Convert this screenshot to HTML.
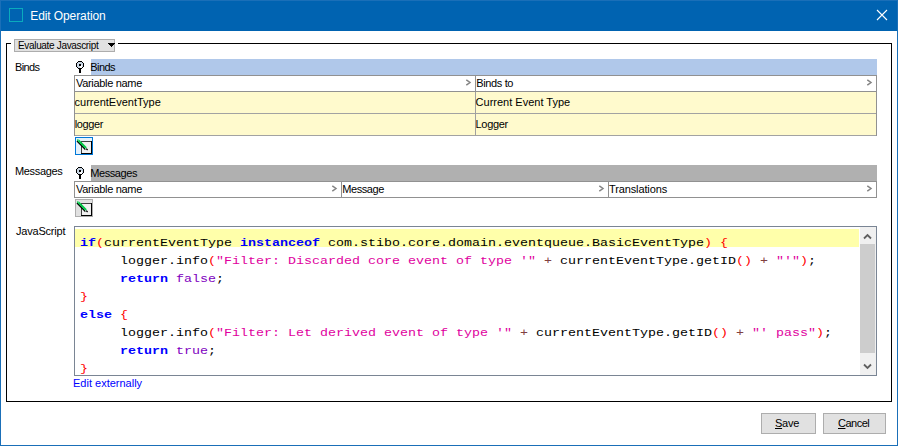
<!DOCTYPE html>
<html>
<head>
<meta charset="utf-8">
<title>Edit Operation</title>
<style>
html,body{margin:0;padding:0;}
body{width:898px;height:446px;overflow:hidden;background:#fff;font-family:"Liberation Sans",sans-serif;font-size:11px;color:#000;position:relative;}
.abs{position:absolute;}
#win{position:absolute;left:0;top:0;width:896px;height:445px;border:1px solid #1A6FB8;border-top:none;background:#fff;}
#title{position:absolute;left:0;top:0;width:896px;height:30px;background:#0063B1;border:1px solid #1A6FB8;border-bottom:none;}
#title .txt{position:absolute;left:29.3px;top:8px;font-size:12px;line-height:14px;color:#fff;white-space:nowrap;letter-spacing:-0.1px;}
#ticon{position:absolute;left:8px;top:7px;width:12px;height:12px;border:1px solid #0AABBD;}
.t{position:absolute;white-space:nowrap;line-height:13px;font-size:11px;}
#grp{position:absolute;left:6px;top:43px;width:884px;height:357px;border:1px solid #000;}
#combo{position:absolute;left:14px;top:39px;width:99px;height:11px;border:1px solid #ADADAD;background:#E1E1E1;}
#combowrap{position:absolute;left:11px;top:38px;width:107px;height:14px;background:#fff;}
.hl{position:absolute;height:16px;}
.tbl{position:absolute;left:74px;width:802px;border:1px solid #828282;box-sizing:content-box;}
.vline{position:absolute;width:1px;background:#919191;}
.hline{position:absolute;height:1px;background:#A2A2A2;}
.btn{position:absolute;border:1px solid #ADADAD;background:#E1E1E1;box-sizing:border-box;}
#code{position:absolute;left:74px;top:226px;width:801px;height:148px;border:1px solid #7A8594;background:#fff;overflow:hidden;}
.ln{position:absolute;left:5px;height:18px;line-height:18px;white-space:pre;font-family:"Liberation Mono",monospace;font-size:13.33px;color:#000;transform:scaleY(0.8);transform-origin:0 12.55px;}
.k{color:#0000FF;font-weight:bold;}
.p{color:#FF0000;}
.s{color:#E0009E;}
.o{color:#804040;}
.c{color:#8000C0;}
</style>
</head>
<body>
<div id="win"></div>
<div id="title">
  <div id="ticon"></div>
  <div class="txt">Edit Operation</div>
  <svg class="abs" style="left:875px;top:8px" width="12" height="12" viewBox="0 0 12 12"><path d="M1 1 L11 11 M11 1 L1 11" stroke="#fff" stroke-width="1.1" fill="none"/></svg>
</div>

<div id="grp"></div>
<div id="combowrap"></div>
<div id="combo"></div>
<div class="t" id="evj" style="left:18px;top:39px;font-size:10px;letter-spacing:-0.33px;">Evaluate Javascript</div>
<svg class="abs" style="left:108px;top:43px" width="7" height="4" viewBox="0 0 7 4" shape-rendering="crispEdges"><path d="M0 0 H7 V1 H6 V2 H5 V3 H4 V4 H3 V3 H2 V2 H1 V1 H0 Z" fill="#000"/></svg>

<!-- Binds -->
<div class="t" id="l_binds" style="left:15px;top:61px;letter-spacing:-0.6px;">Binds</div>
<svg class="abs pin" style="left:76px;top:61px" width="8" height="12" viewBox="0 0 8 12" shape-rendering="crispEdges"><path d="M2 0 H6 V1 H7 V2 H8 V6 H7 V7 H6 V8 H2 V7 H1 V6 H0 V2 H1 V1 H2 Z" fill="#000"/><path d="M2 1 H6 V2 H7 V6 H6 V7 H2 V6 H1 V2 H2 Z" fill="#C9D6E4"/><path d="M4 4 H6 V6 H7 V6 H6 V7 H4 Z" fill="#fff"/><rect x="3" y="3" width="2" height="2" fill="#000"/><rect x="3" y="8" width="2" height="4" fill="#000"/></svg>
<div class="hl" style="left:91px;top:59px;width:786px;background:#B0C8EA;"></div>
<div class="t" id="h_binds" style="left:90.3px;top:61px;letter-spacing:-0.6px;">Binds</div>

<div class="abs" style="left:74px;top:75px;width:803px;height:61px;background:#FFFACD;"></div>
<div class="abs" style="left:74px;top:75px;width:803px;height:17px;background:#fff;"></div>
<div class="hline" style="left:74px;top:75px;width:803px;background:#919191;"></div>
<div class="hline" style="left:74px;top:91px;width:803px;background:#919191;"></div>
<div class="hline" style="left:74px;top:113px;width:803px;"></div>
<div class="hline" style="left:74px;top:135px;width:803px;"></div>
<div class="vline" style="left:74px;top:75px;height:61px;"></div>
<div class="vline" style="left:876px;top:75px;height:61px;"></div>
<div class="vline" style="left:475px;top:75px;height:17px;"></div>
<div class="vline" style="left:475px;top:92px;height:44px;background:#A0A0A0;"></div>
<div class="t" id="b_vn" style="left:76px;top:77px;letter-spacing:-0.32px;">Variable name</div>
<div class="t" id="b_bt" style="left:476.2px;top:77px;letter-spacing:-0.35px;">Binds to</div>
<div class="t" id="b_r1a" style="left:74.6px;top:96px;">currentEventType</div>
<div class="t" id="b_r1b" style="left:475.6px;top:96px;">Current Event Type</div>
<div class="t" id="b_r2a" style="left:74.8px;top:118px;letter-spacing:-0.4px;">logger</div>
<div class="t" id="b_r2b" style="left:475.6px;top:118px;letter-spacing:-0.35px;">Logger</div>
<svg class="abs" style="left:465px;top:79px" width="7" height="7" viewBox="0 0 7 7"><path d="M1.3 0.8 L5 3.5 L1.3 6.2" stroke="#858585" stroke-width="1.5" fill="none"/></svg>
<svg class="abs" style="left:866px;top:79px" width="7" height="7" viewBox="0 0 7 7"><path d="M1.3 0.8 L5 3.5 L1.3 6.2" stroke="#858585" stroke-width="1.5" fill="none"/></svg>

<!-- edit icon 1 -->
<div class="btn" style="left:75px;top:137px;width:18px;height:18px;border-color:#0078D7;background:#E5F1FB;"></div>
<svg class="abs" style="left:75px;top:137px" width="18" height="18" viewBox="0 0 18 18"><g shape-rendering="crispEdges"><rect x="6" y="4" width="11" height="13" fill="#404040"/><rect x="7" y="5" width="9" height="11" fill="#F0F0F0"/><rect x="16" y="4" width="1" height="13" fill="#000"/><rect x="6" y="16" width="11" height="1" fill="#000"/></g><path d="M2.0 4.0 L10.4 12.4" stroke="#000" stroke-width="1.4"/><path d="M3.0 3.0 L10.8 10.8" stroke="#00C846" stroke-width="2" stroke-linecap="round"/><path d="M2.6 2.0 L3.8 3.2" stroke="#e8fff0" stroke-width="1"/><path d="M10.8 11.0 L11.4 11.6" stroke="#fff" stroke-width="1.4"/><path d="M11.2 11.6 L12.6 13.0" stroke="#000" stroke-width="1.3"/></svg>

<!-- Messages -->
<div class="t" id="l_msg" style="left:15px;top:165px;letter-spacing:-0.33px;">Messages</div>
<svg class="abs pin" style="left:76px;top:167px" width="8" height="12" viewBox="0 0 8 12" shape-rendering="crispEdges"><path d="M2 0 H6 V1 H7 V2 H8 V6 H7 V7 H6 V8 H2 V7 H1 V6 H0 V2 H1 V1 H2 Z" fill="#000"/><path d="M2 1 H6 V2 H7 V6 H6 V7 H2 V6 H1 V2 H2 Z" fill="#C9D6E4"/><path d="M4 4 H6 V6 H7 V6 H6 V7 H4 Z" fill="#fff"/><rect x="3" y="3" width="2" height="2" fill="#000"/><rect x="3" y="8" width="2" height="4" fill="#000"/></svg>
<div class="hl" style="left:91px;top:165px;width:786px;background:#B0B0B0;"></div>
<div class="t" id="h_msg" style="left:90.2px;top:167px;letter-spacing:-0.4px;">Messages</div>
<div class="abs" style="left:74px;top:181px;width:803px;height:17px;background:#fff;"></div>
<div class="hline" style="left:74px;top:181px;width:803px;background:#919191;"></div>
<div class="hline" style="left:74px;top:197px;width:803px;background:#919191;"></div>
<div class="vline" style="left:74px;top:181px;height:17px;"></div>
<div class="vline" style="left:876px;top:181px;height:17px;"></div>
<div class="vline" style="left:341px;top:181px;height:17px;"></div>
<div class="vline" style="left:608px;top:181px;height:17px;"></div>
<div class="t" id="m_vn" style="left:76px;top:183px;letter-spacing:-0.32px;">Variable name</div>
<div class="t" id="m_ms" style="left:342.2px;top:183px;letter-spacing:-0.4px;">Message</div>
<div class="t" id="m_tr" style="left:609px;top:183px;letter-spacing:-0.12px;">Translations</div>
<svg class="abs" style="left:331px;top:185px" width="7" height="7" viewBox="0 0 7 7"><path d="M1.3 0.8 L5 3.5 L1.3 6.2" stroke="#858585" stroke-width="1.5" fill="none"/></svg>
<svg class="abs" style="left:598px;top:185px" width="7" height="7" viewBox="0 0 7 7"><path d="M1.3 0.8 L5 3.5 L1.3 6.2" stroke="#858585" stroke-width="1.5" fill="none"/></svg>
<svg class="abs" style="left:866px;top:185px" width="7" height="7" viewBox="0 0 7 7"><path d="M1.3 0.8 L5 3.5 L1.3 6.2" stroke="#858585" stroke-width="1.5" fill="none"/></svg>

<!-- edit icon 2 -->
<div class="btn" style="left:75px;top:199px;width:18px;height:18px;"></div>
<svg class="abs" style="left:75px;top:199px" width="18" height="18" viewBox="0 0 18 18"><g shape-rendering="crispEdges"><rect x="6" y="4" width="11" height="13" fill="#404040"/><rect x="7" y="5" width="9" height="11" fill="#F0F0F0"/><rect x="16" y="4" width="1" height="13" fill="#000"/><rect x="6" y="16" width="11" height="1" fill="#000"/></g><path d="M2.0 4.0 L10.4 12.4" stroke="#000" stroke-width="1.4"/><path d="M3.0 3.0 L10.8 10.8" stroke="#00C846" stroke-width="2" stroke-linecap="round"/><path d="M2.6 2.0 L3.8 3.2" stroke="#e8fff0" stroke-width="1"/><path d="M10.8 11.0 L11.4 11.6" stroke="#fff" stroke-width="1.4"/><path d="M11.2 11.6 L12.6 13.0" stroke="#000" stroke-width="1.3"/></svg>

<!-- JavaScript -->
<div class="t" id="l_js" style="left:16px;top:225px;letter-spacing:-0.2px;">JavaScript</div>
<div id="code">
  <div class="abs" style="left:0px;top:2px;width:784px;height:18px;background:#FFFFAA;"></div>
  <div class="ln" style="top:7px;"><span class="k">if</span><span class="p">(</span>currentEventType <span class="k">instanceof</span> com.stibo.core.domain.eventqueue.BasicEventType<span class="p">)</span> <span class="p">{</span></div>
  <div class="ln" style="top:25px;">     logger.info<span class="p">(</span><span class="s">"Filter: Discarded core event of type '"</span> <span class="o">+</span> currentEventType.getID<span class="p">()</span> <span class="o">+</span> <span class="s">"'"</span><span class="p">)</span>;</div>
  <div class="ln" style="top:43px;">     <span class="k">return</span> <span class="c">false</span>;</div>
  <div class="ln" style="top:61px;"><span class="p">}</span></div>
  <div class="ln" style="top:79px;"><span class="k">else</span> <span class="p">{</span></div>
  <div class="ln" style="top:97px;">     logger.info<span class="p">(</span><span class="s">"Filter: Let derived event of type '"</span> <span class="o">+</span> currentEventType.getID<span class="p">()</span> <span class="o">+</span> <span class="s">"' pass"</span><span class="p">)</span>;</div>
  <div class="ln" style="top:115px;">     <span class="k">return</span> <span class="c">true</span>;</div>
  <div class="ln" style="top:133px;"><span class="p">}</span></div>
  <!-- scrollbar -->
  <div class="abs" style="left:785px;top:0;width:16px;height:148px;background:#F0F0F0;"></div>
  <div class="abs" style="left:785px;top:17px;width:15px;height:109px;background:#CDCDCD;"></div>
  <svg class="abs" style="left:788px;top:6px" width="9" height="7" viewBox="0 0 9 7"><path d="M1 5.5 L4.5 2 L8 5.5" stroke="#606060" stroke-width="1.8" fill="none"/></svg>
  <svg class="abs" style="left:788px;top:136px" width="9" height="7" viewBox="0 0 9 7"><path d="M1 1.5 L4.5 5 L8 1.5" stroke="#606060" stroke-width="1.8" fill="none"/></svg>
</div>
<div class="t" id="l_ext" style="left:73px;top:377px;color:#0000FF;">Edit externally</div>

<!-- buttons -->
<div class="btn" style="left:761px;top:413px;width:55px;height:21px;"></div>
<div class="btn" style="left:823px;top:413px;width:63px;height:21px;"></div>
<div class="t" id="b_save" style="left:775px;top:417px;letter-spacing:-0.25px;"><u>S</u>ave</div>
<div class="t" id="b_cancel" style="left:838px;top:417px;letter-spacing:-0.5px;"><u>C</u>ancel</div>
</body>
</html>
